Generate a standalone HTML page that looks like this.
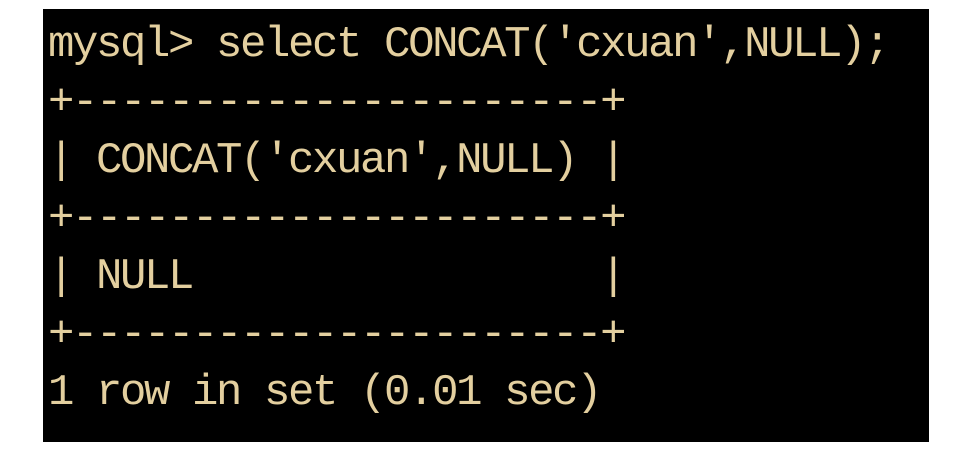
<!DOCTYPE html>
<html><head><meta charset="utf-8"><style>
html,body{margin:0;padding:0;background:#fff;width:968px;height:458px;overflow:hidden}
.box{position:absolute;left:43px;top:9px;width:886px;height:433px;background:#000}
pre{position:absolute;left:48px;top:16px;margin:0;font-family:"Liberation Mono",monospace;font-size:44px;letter-spacing:-2.4px;line-height:58px;color:#e3cf9f;white-space:pre}
</style></head><body>
<div class="box"></div>
<pre>mysql&gt; select CONCAT('cxuan',NULL);
+----------------------+
| CONCAT('cxuan',NULL) |
+----------------------+
| NULL                 |
+----------------------+
1 row in set (0.01 sec)</pre>
</body></html>
